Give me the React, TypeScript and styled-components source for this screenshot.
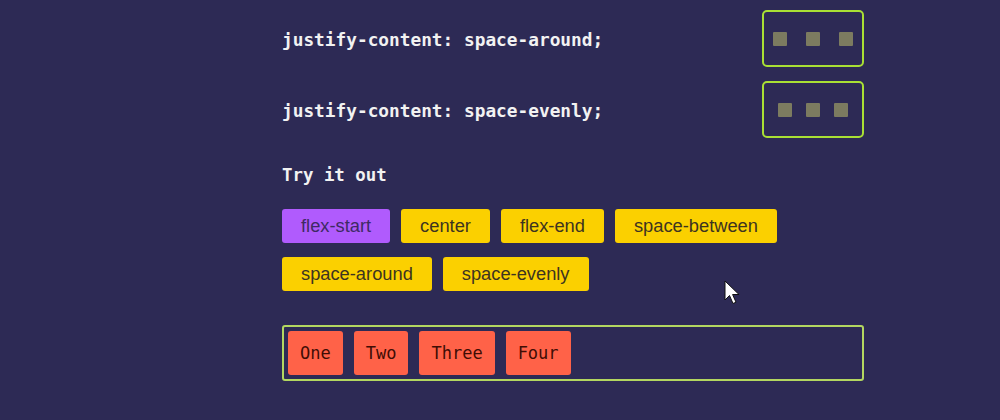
import { createGlobalStyle, styled } from "styled-components";

const GlobalStyle = createGlobalStyle`
  html, body {
    margin: 0;
    padding: 0;
    background: #2d2a55;
  }
`;

const Page = styled.div`
  position: relative;
  width: 1000px;
  height: 420px;
  overflow: hidden;
  background: #2d2a55;
`;

const Column = styled.div`
  display: flex;
  flex-direction: column;
  width: 582px;
  margin-left: 282px;
  padding-top: 10px;
`;

const DemoRow = styled.div`
  display: flex;
  align-items: center;
  justify-content: space-between;
  margin-bottom: 14px;
`;

const Code = styled.code`
  font-family: "DejaVu Sans Mono", monospace;
  font-weight: bold;
  font-size: 17.8px;
  color: #f2f2f2;
  padding-top: 2px;
`;

const MiniBox = styled.div<{ $justify: string }>`
  display: flex;
  align-items: center;
  justify-content: ${(p) => p.$justify};
  width: 98px;
  height: 53px;
  border: 2px solid #a9e034;
  border-radius: 5px;
`;

const Dot = styled.span`
  width: 14px;
  height: 14px;
  border-radius: 1px;
  background: #7c7b60;
`;

const Heading = styled.h3`
  margin: 13px 0 0;
  font-family: "DejaVu Sans Mono", monospace;
  font-weight: bold;
  font-size: 17.4px;
  color: #f2f2f2;
`;

const Options = styled.div`
  display: flex;
  flex-wrap: wrap;
  column-gap: 11px;
  row-gap: 14px;
  margin-top: 24px;
  width: 520px;
`;

const Option = styled.button<{ $active?: boolean }>`
  height: 34px;
  padding: 0 19px;
  border: none;
  border-radius: 3px;
  background: ${(p) => (p.$active ? "#b05bfd" : "#fbd000")};
  color: ${(p) => (p.$active ? "#3e2a63" : "#3d3420")};
  font-family: "Liberation Sans", Arial, sans-serif;
  font-size: 18.3px;
  cursor: pointer;
`;

const Stage = styled.div`
  display: flex;
  justify-content: flex-start;
  gap: 11px;
  margin-top: 34px;
  padding: 4px;
  height: 44px;
  border: 2px solid #b3d760;
  border-radius: 3px;
`;

const Item = styled.div`
  display: flex;
  align-items: center;
  padding: 0 12px;
  border-radius: 3px;
  background: #ff6248;
  color: #3f0d05;
  font-family: "DejaVu Sans Mono", monospace;
  font-size: 17px;
`;

const Cursor = styled.svg`
  position: absolute;
  left: 724px;
  top: 280px;
`;

const options = [
  "flex-start",
  "center",
  "flex-end",
  "space-between",
  "space-around",
  "space-evenly",
];

export default function App() {
  return (
    <Page>
      <GlobalStyle />
      <Column>
        <DemoRow>
          <Code>justify-content: space-around;</Code>
          <MiniBox $justify="space-around">
            <Dot />
            <Dot />
            <Dot />
          </MiniBox>
        </DemoRow>
        <DemoRow>
          <Code>justify-content: space-evenly;</Code>
          <MiniBox $justify="space-evenly">
            <Dot />
            <Dot />
            <Dot />
          </MiniBox>
        </DemoRow>
        <Heading>Try it out</Heading>
        <Options>
          {options.map((o) => (
            <Option key={o} $active={o === "flex-start"}>
              {o}
            </Option>
          ))}
        </Options>
        <Stage>
          <Item>One</Item>
          <Item>Two</Item>
          <Item>Three</Item>
          <Item>Four</Item>
        </Stage>
      </Column>
      <Cursor width="18" height="26" viewBox="0 0 18 26">
        <path
          d="M1 1 L1 20 L5.5 15.5 L9 23.5 L12 22.2 L8.6 14.5 L15 14.5 Z"
          fill="#ffffff"
          stroke="#111111"
          strokeWidth="1"
        />
      </Cursor>
    </Page>
  );
}
